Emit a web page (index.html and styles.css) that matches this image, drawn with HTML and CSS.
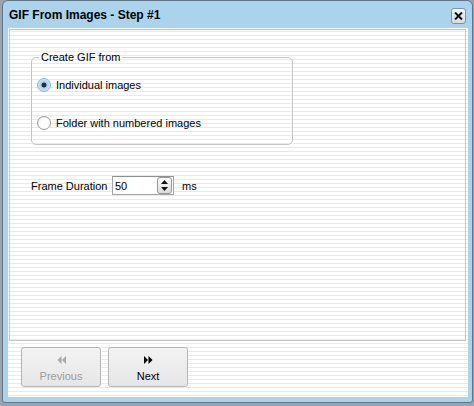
FILE: index.html
```html
<!DOCTYPE html>
<html>
<head>
<meta charset="utf-8">
<link rel="stylesheet" href="styles.css">
</head>
<body>
<div class="window">
  <div class="titlebar">
    <span class="title">GIF From Images - Step #1</span>
    <span class="close"><svg width="9" height="8" viewBox="0 0 9 8"><path d="M1 0.5 L8 7.5 M8 0.5 L1 7.5" stroke="#111" stroke-width="2"/></svg></span>
  </div>
  <div class="client">
    <div class="panel">
      <fieldset class="group">
        <legend>Create GIF from</legend>
        <div class="radio-row first"><span class="radio checked"></span><span>Individual images</span></div>
        <div class="radio-row second"><span class="radio"></span><span>Folder with numbered images</span></div>
      </fieldset>
      <div class="duration-row">
        <span class="label">Frame Duration</span>
        <div class="spinbox">
          <span class="value">50</span>
          <span class="spin">
            <svg width="15" height="17" viewBox="0 0 15 17"><path d="M7.5 3 L11 7 L4 7 Z M7.5 14 L11 10 L4 10 Z" fill="#111"/></svg>
          </span>
        </div>
        <span class="unit">ms</span>
      </div>
    </div>
    <div class="footer">
      <div class="btn disabled">
        <svg width="9" height="8" viewBox="0 0 9 8"><path d="M4.5 0 L0.5 4 L4.5 8 Z M9 0 L5 4 L9 8 Z" fill="#a8a8a8"/></svg>
        <span class="btn-text">Previous</span>
      </div>
      <div class="btn">
        <svg width="9" height="8" viewBox="0 0 9 8"><path d="M0 0 L4 4 L0 8 Z M4.5 0 L8.5 4 L4.5 8 Z" fill="#000"/></svg>
        <span class="btn-text">Next</span>
      </div>
    </div>
  </div>
</div>
</body>
</html>
```

FILE: styles.css
```css
* { box-sizing: border-box; }
html, body { margin: 0; padding: 0; }
body {
  width: 474px;
  height: 406px;
  background: #9aa3ab;
  font-family: "Liberation Sans", Arial, sans-serif;
  font-size: 11px;
  color: #000;
  overflow: hidden;
}
.window {
  margin-left: 2px;
  width: 471px;
  height: 403px;
  background: #acd3ec;
  border: 1px solid #5f7486;
  border-radius: 6px 6px 3px 3px;
  padding: 0 4px 5px 5px;
  display: flex;
  flex-direction: column;
}
.titlebar {
  height: 27px;
  display: flex;
  align-items: center;
  justify-content: space-between;
  padding: 0 2px 0 1px;
}
.title {
  font-weight: bold;
  font-size: 12px;
  color: #000;
  margin-top: 1px;
}
.close {
  width: 15px;
  height: 16px;
  margin-top: 2px;
  border: 1px solid #7c93a7;
  border-radius: 3px;
  background: linear-gradient(#f4f6f8, #d6dde3);
  display: flex;
  align-items: center;
  justify-content: center;
}
.client {
  flex: 1;
  padding: 1px 2px 0 1px;
  background: repeating-linear-gradient(to bottom, #ffffff 0 3px, #e9e9e9 3px 4px);
  display: flex;
  flex-direction: column;
}
.panel {
  height: 312px;
  border: 1px solid #c6c6c6;
  border-top-color: #bdbdbd;
  padding-left: 21px;
}
.group {
  margin: 21px 0 0 0;
  width: 262px;
  border: 1px solid #c4c4c4;
  border-radius: 5px;
  padding: 13px 0 14px 5px;
}
.group legend {
  margin-left: 2px;
  padding: 0 2px;
  line-height: 13px;
  font-size: 11px;
}
.radio-row {
  display: flex;
  align-items: center;
  height: 15px;
  gap: 5px;
}
.radio-row.second { margin-top: 23px; }
.radio {
  width: 14px;
  height: 14px;
  border-radius: 50%;
  border: 1px solid #9a9a9a;
  background: radial-gradient(circle at 60% 60%, #ffffff 0 45%, #e2e2e2 100%);
  flex: none;
}
.radio.checked {
  border-color: #8fb4cf;
  background: radial-gradient(circle at 50% 50%, #1f3546 0 2.2px, #a7cde5 2.8px, #cfe5f3 70%, #e6f2f9 100%);
}
.duration-row {
  margin-top: 31px;
  display: flex;
  align-items: center;
  height: 19px;
}
.label { width: 81px; }
.spinbox {
  width: 62px;
  height: 19px;
  border: 1px solid #a5a5a5;
  border-top-color: #8e8e8e;
  background: #fff;
  display: flex;
  align-items: center;
  justify-content: space-between;
  padding-left: 2px;
}
.spin {
  width: 15px;
  height: 17px;
  margin-right: 1px;
  border: 1px solid #8f9aa3;
  border-radius: 3px;
  background: linear-gradient(#fafafa, #dcdcdc);
  display: flex;
  align-items: center;
  justify-content: center;
}
.spin svg { display: block; margin: -1px; }
.unit { margin-left: 8px; }
.footer {
  display: flex;
  gap: 7px;
  padding: 6px 0 0 12px;
}
.btn {
  width: 80px;
  height: 40px;
  border: 1px solid #b4b4b4;
  border-radius: 3px;
  background: linear-gradient(#f3f3f3, #e6e6e6);
  display: flex;
  flex-direction: column;
  align-items: center;
  padding-top: 8px;
}
.btn svg { display: block; }
.btn-text {
  margin-top: 6px;
  line-height: 13px;
  font-size: 11px;
}
.btn.disabled .btn-text { color: #9c9c9c; }
```
